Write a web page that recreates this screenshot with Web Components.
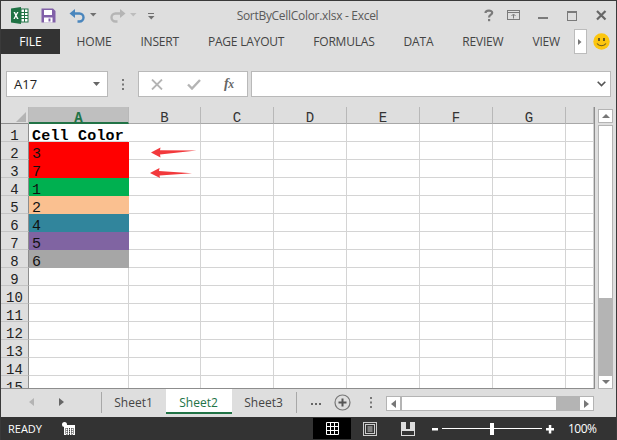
<!DOCTYPE html>
<html>
<head>
<meta charset="utf-8">
<title>SortByCellColor.xlsx - Excel</title>
<style>
  html, body { margin: 0; padding: 0; background: #dedede; }
  body { width: 617px; height: 440px; overflow: hidden; font-family: "Open Sans", sans-serif; }
</style>
</head>
<body>
<xl-window>
  <xl-titlebar title-text="SortByCellColor.xlsx - Excel"></xl-titlebar>
  <xl-ribbon></xl-ribbon>
  <xl-formula-bar cell="A17"></xl-formula-bar>
  <xl-sheet></xl-sheet>
  <xl-tabs></xl-tabs>
  <xl-status></xl-status>
</xl-window>

<script>
function shadow(el, html) {
  const root = el.attachShadow({ mode: 'open' });
  root.innerHTML = html;
  return root;
}

class XlWindow extends HTMLElement {
  constructor() {
    super();
    shadow(this, `
      <style>
        :host {
          display: flex;
          flex-direction: column;
          box-sizing: border-box;
          width: 617px;
          height: 440px;
          background: #dedede;
          border: 1px solid #3a3a3a;
          border-bottom: 0;
          overflow: hidden;
        }
      </style>
      <slot></slot>
    `);
  }
}

class XlTitlebar extends HTMLElement {
  connectedCallback() {
    if (this.shadowRoot) return;
    shadow(this, `
      <style>
        :host {
          display: block;
          position: relative;
          height: 28px;
          flex: none;
        }
        .title {
          display: flex;
          justify-content: center;
          align-items: center;
          box-sizing: border-box;
          height: 28px;
          padding: 1px 2px 0 0;
          font: 12px/27px "Open Sans", sans-serif;
          color: #5a5a5a;
          letter-spacing: -0.3px;
        }
        svg { position: absolute; display: block; }
      </style>
      <div class="title">${this.getAttribute('title-text')}</div>

      <svg style="left:10px;top:6px" width="18" height="17" viewBox="0 0 18 17">
        <rect x="6" y="2" width="11" height="13" fill="#fff" stroke="#1f7244"/>
        <path d="M10 2v13M13.5 2v13M6 5.500h11M6 8.500h11M6 11.500h11" stroke="#1f7244" fill="none"/>
        <path d="M0 1.500 10 0v17L0 15.500z" fill="#1f7244"/>
        <path d="M2.500 5 4 5l1 2 1.100-2 1.400 0-1.800 3.400 1.900 3.600H6l-1.100-2.200L3.800 12H2.400l1.800-3.600z" fill="#fff"/>
      </svg>

      <svg style="left:40px;top:7px" width="15" height="15" viewBox="0 0 15 15">
        <path d="M0.500 0.500h11.500l2.500 2.500v11.500H0.500z" fill="#8160a8"/>
        <rect x="3" y="2" width="8" height="5" fill="#fff"/>
        <rect x="3" y="9.500" width="8.500" height="5" fill="#fff"/>
        <rect x="7.500" y="10.500" width="2" height="3" fill="#8160a8"/>
      </svg>

      <svg style="left:68px;top:7px" width="17" height="15" viewBox="0 0 17 15">
        <path d="M3 5.500h7.500a3.800 3.800 0 0 1 0 8h-2" fill="none" stroke="#4a86bd" stroke-width="2.400"/>
        <path d="M0.500 5.500 6 1v9z" fill="#4a86bd"/>
      </svg>
      <svg style="left:89px;top:12px" width="7" height="4"><path d="M0 0h6.500L3.250 3.500z" fill="#707070"/></svg>

      <svg style="left:108px;top:7px" width="17" height="15" viewBox="0 0 17 15">
        <path d="M14 5.500H6.500a3.800 3.800 0 0 0 0 8h2" fill="none" stroke="#b5b5b5" stroke-width="2.400"/>
        <path d="M16.500 5.500 11 1v9z" fill="#b5b5b5"/>
      </svg>
      <svg style="left:129px;top:12px" width="7" height="4"><path d="M0 0h6.500L3.250 3.500z" fill="#bdbdbd"/></svg>

      <svg style="left:147px;top:12px" width="7" height="8">
        <path d="M0 0.500h6" stroke="#707070"/><path d="M0 3h6.500L3.250 6.500z" fill="#707070"/>
      </svg>

      <svg style="left:483px;top:8px" width="10" height="13" viewBox="0 0 10 13">
        <path d="M1.500 4C1.500 1 8.200 .8 8.200 3.800 8.200 5.800 5 5.500 5 8.500" fill="none" stroke="#7a7a7a" stroke-width="2.200"/>
        <rect x="4" y="10" width="2.200" height="2.200" fill="#7a7a7a"/>
      </svg>
      <svg style="left:506px;top:9px" width="14" height="11" viewBox="0 0 14 11">
        <rect x="0.500" y="0.500" width="12" height="9" fill="none" stroke="#7a7a7a"/>
        <path d="M0 2.500h13" stroke="#7a7a7a"/>
        <path d="M6.500 8.500V4.500M4.500 6l2-2 2 2" fill="none" stroke="#7a7a7a"/>
      </svg>
      <svg style="left:537px;top:16px" width="10" height="2"><rect width="10" height="2" fill="#7a7a7a"/></svg>
      <svg style="left:566px;top:10px" width="11" height="10" viewBox="0 0 11 10">
        <rect x="0.500" y="0.500" width="9" height="9" fill="none" stroke="#7a7a7a"/>
        <rect x="0" y="0" width="10" height="2" fill="#7a7a7a"/>
      </svg>
      <svg style="left:595px;top:9px" width="11" height="11" viewBox="0 0 11 11">
        <path d="M1 1l8.500 8.500M9.500 1 1 9.500" stroke="#666" stroke-width="2.200" fill="none"/>
      </svg>
    `);
  }
}

class XlRibbon extends HTMLElement {
  constructor() {
    super();
    const tabs = ['HOME', 'INSERT', 'PAGE LAYOUT', 'FORMULAS', 'DATA', 'REVIEW', 'VIEW'];
    shadow(this, `
      <style>
        :host {
          display: flex;
          align-items: stretch;
          height: 25px;
          flex: none;
          font: 12px/25px "Open Sans", sans-serif;
          color: #444;
        }
        .file {
          width: 59px;
          background: #333;
          color: #fff;
          text-align: center;
          flex: none;
        }
        .tabs {
          display: flex;
          gap: 29px;
          margin-left: 16.600px;
          width: 497.400px;
          flex: none;
          letter-spacing: -0.2px;
          white-space: nowrap;
        }
        .more {
          box-sizing: border-box;
          width: 13px;
          background: #fff;
          border: 1px solid #bcbcbc;
          display: flex;
          align-items: center;
          justify-content: center;
          flex: none;
        }
        .smile { margin-left: 6px; margin-top: 4px; display: block; flex: none; }
      </style>
      <div class="file">FILE</div>
      <div class="tabs">${tabs.map(t => `<span>${t}</span>`).join('')}</div>
      <div class="more"><svg width="4" height="6"><path d="M0 0l3.500 3L0 6z" fill="#777"/></svg></div>
      <svg class="smile" width="17" height="17" viewBox="0 0 17 17">
        <circle cx="8.500" cy="8.500" r="8.200" fill="#fcc60e"/>
        <rect x="5" y="5" width="2" height="3" fill="#6b5a20"/>
        <rect x="10" y="5" width="2" height="3" fill="#6b5a20"/>
        <path d="M4 10.500c2 3 7 3 9 0" fill="none" stroke="#6b5a20" stroke-width="1.100"/>
      </svg>
    `);
  }
}

class XlFormulaBar extends HTMLElement {
  connectedCallback() {
    if (this.shadowRoot) return;
    shadow(this, `
      <style>
        :host {
          display: flex;
          align-items: stretch;
          flex: none;
          height: 26px;
          margin: 17px 0 10px 5px;
        }
        .box {
          box-sizing: border-box;
          background: #fff;
          border: 1px solid #b9b9b9;
          flex: none;
        }
        .name {
          width: 102px;
          display: flex;
          align-items: center;
          justify-content: space-between;
          padding: 0 7px 0 7px;
          font: 13px "Open Sans", sans-serif;
          color: #222;
        }
        .dots { width: 30px; flex: none; display: flex; align-items: center; justify-content: center; }
        .btns {
          width: 110px;
          display: flex;
          align-items: center;
          font: italic 14px "Liberation Serif", serif;
          color: #666;
        }
        .input {
          flex: none;
          width: 360px;
          margin-left: 3px;
          display: flex;
          align-items: center;
          justify-content: flex-end;
          padding-right: 4px;
        }
        svg { display: block; }
        .fx { margin-left: 23px; letter-spacing: -0.5px; font-weight: bold; }
      </style>
      <div class="box name">
        <span>${this.getAttribute('cell')}</span>
        <svg width="7" height="4"><path d="M0 0h7L3.500 4z" fill="#666"/></svg>
      </div>
      <div class="dots">
        <svg width="2" height="11"><path d="M0 0h2v2H0zM0 4.500h2v2H0zM0 9h2v2H0z" fill="#777"/></svg>
      </div>
      <div class="box btns">
        <svg style="margin-left:12px" width="12" height="11" viewBox="0 0 12 11"><path d="M1 0.500 11 10.500M11 0.500 1 10.500" stroke="#b4b4b4" stroke-width="1.800" fill="none"/></svg>
        <svg style="margin-left:24px" width="14" height="11" viewBox="0 0 14 11"><path d="M1 5.500 5 9.500 13 1" stroke="#b4b4b4" stroke-width="2.400" fill="none"/></svg>
        <span class="fx">f<small>x</small></span>
      </div>
      <div class="box input">
        <svg width="9" height="6" viewBox="0 0 9 6"><path d="M0.700 0.700 4.500 4.500 8.300 0.700" stroke="#555" stroke-width="1.600" fill="none"/></svg>
      </div>
    `);
  }
}

class XlSheet extends HTMLElement {
  constructor() {
    super();
    const colW = [100, 72, 73, 73, 73, 73, 73, 28];
    const letters = ['A', 'B', 'C', 'D', 'E', 'F', 'G', ''];
    const fills = { 2: '#ff0000', 3: '#ff0000', 4: '#00b050', 5: '#fac090', 6: '#31859c', 7: '#8064a2', 8: '#a6a6a6' };
    const vals = { 1: 'Cell Color', 2: '3', 3: '7', 4: '1', 5: '2', 6: '4', 7: '5', 8: '6' };

    let cells = '<div class="corner"><svg width="10" height="10"><path d="M10 0v10H0z" fill="#b4b4b4"/></svg></div>';
    letters.forEach((l, i) => {
      cells += `<div class="col${i === 0 ? ' sel' : ''}">${l}</div>`;
    });
    for (let r = 1; r <= 15; r++) {
      cells += `<div class="row">${r}</div>`;
      letters.forEach((l, i) => {
        if (i === 0 && vals[r]) {
          const style = fills[r] ? `background:${fills[r]};border-color:${fills[r]}` : '';
          cells += `<div class="cell a${r === 1 ? ' head' : ''}" style="${style}">${vals[r]}</div>`;
        } else {
          cells += '<div class="cell"></div>';
        }
      });
    }

    shadow(this, `
      <style>
        :host {
          display: flex;
          flex: none;
          height: 282px;
          position: relative;
          overflow: hidden;
        }
        .grid {
          display: grid;
          grid-template-columns: 28px ${colW.map(w => w + 'px').join(' ')};
          grid-template-rows: 17px repeat(15, 18px);
          width: 594px;
          height: 282px;
          flex: none;
          overflow: hidden;
          box-sizing: border-box;
          border-right: 1px solid #8d8d8d;
          border-bottom: 1px solid #8d8d8d;
        }
        .corner, .col, .row, .cell { box-sizing: border-box; min-height: 0; }
        .corner {
          background: #dedede;
          border-bottom: 1px solid #8d8d8d;
          border-right: 1px solid #b8b8b8;
          padding: 5px 0 0 15px;
        }
        .corner svg { display: block; }
        .col {
          background: #dedede;
          border-right: 1px solid #b8b8b8;
          border-bottom: 1px solid #a8a8a8;
          text-align: center;
          padding-top: 4px;
          font: 14px/14px "Liberation Mono", monospace;
          color: #333;
        }
        .col.sel {
          background: #bfbfbf;
          border-bottom: 2px solid #217346;
          color: #217346;
          font-weight: bold;
        }
        .row {
          background: #dedede;
          border-right: 1px solid #8d8d8d;
          border-bottom: 1px solid #c4c4c4;
          text-align: center;
          padding-top: 7px;
          font: 14px/11px "Liberation Mono", monospace;
          color: #222;
        }
        .cell {
          background: #fff;
          border-right: 1px solid #d4d4d4;
          border-bottom: 1px solid #d4d4d4;
        }
        .cell.a {
          font: 15px/11px "Liberation Mono", monospace;
          color: #111;
          padding: 7px 0 0 3px;
          white-space: pre;
        }
        .cell.head {
          font: bold 15px/11px "Liberation Mono", monospace;
          letter-spacing: 0.2px;
          color: #000;
          border-right-color: #fff;
        }
        .vbar {
          flex: none;
          width: 15px;
          margin-left: 3px;
          margin-top: 2px;
          display: flex;
          flex-direction: column;
          height: 280px;
        }
        .btn {
          box-sizing: border-box;
          flex: none;
          background: #fff;
          border: 1px solid #b4b4b4;
          height: 14px;
          display: flex;
          align-items: center;
          justify-content: center;
        }
        .thumb {
          box-sizing: border-box;
          flex: none;
          height: 174px;
          margin-top: 2px;
          background: #fff;
          border: 1px solid #b4b4b4;
        }
        .track { flex: 1; background: #b4b4b4; }
        .arrow { position: absolute; display: block; }
      </style>
      <div class="grid">${cells}</div>
      <div class="vbar">
        <div class="btn"><svg width="8" height="4"><path d="M4 0l4 4H0z" fill="#777"/></svg></div>
        <div class="thumb"></div>
        <div class="track"></div>
        <div class="btn"><svg width="8" height="4"><path d="M4 4 8 0H0z" fill="#777"/></svg></div>
      </div>
      <svg class="arrow" style="left:148px;top:40px" width="50" height="38" viewBox="0 0 50 38">
        <path d="M2 5.500 11.500 0.500 11 3.300 47.500 3.500 11 7.500 11.500 10.500z" fill="#f2393c"/>
        <path d="M1 26 10.500 21 10 24 43 26.200 10.500 28.500 11 31z" fill="#f2393c"/>
      </svg>
    `);
  }
}

class XlTabs extends HTMLElement {
  constructor() {
    super();
    shadow(this, `
      <style>
        :host {
          display: flex;
          flex: none;
          height: 28px;
          align-items: flex-start;
          font: 12px "Open Sans", sans-serif;
          color: #444;
          background: #dedede;
        }
        .nav {
          box-sizing: border-box;
          width: 100px;
          height: 26px;
          flex: none;
          display: flex;
          align-items: center;
          padding-left: 28px;
          gap: 25px;
        }
        .nav svg { display: block; }
        .tab {
          box-sizing: border-box;
          flex: none;
          display: flex;
          align-items: center;
          justify-content: center;
          width: 65px;
          height: 21px;
          margin-top: 3px;
          padding-right: 1px;
          border-left: 1px solid #a8a8a8;
        }
        .tab.on {
          width: 66px;
          height: 25px;
          margin-top: 0;
          padding-top: 3px;
          background: #fff;
          color: #217346;
          border-left: 0;
          border-bottom: 2px solid #217346;
        }
        .tab.last { border-left: 0; border-right: 1px solid #a8a8a8; }
        .tail {
          flex: none;
          display: flex;
          align-items: center;
          height: 26px;
          margin-left: 14px;
        }
        .ell { display: block; margin-top: 3px; }
        .plus { display: block; margin-left: 13px; }
        .dots { display: block; margin-left: 19px; }
        .hbar {
          box-sizing: border-box;
          flex: none;
          width: 208px;
          height: 15px;
          margin: 7px 0 0 14px;
          border: 1px solid #b4b4b4;
          background: #fff;
          display: flex;
          align-items: stretch;
        }
        .hbtn { flex: none; width: 13px; display: flex; align-items: center; justify-content: center; }
        .hthumb { flex: none; width: 154px; border-left: 2px solid #b4b4b4; }
        .htrack { flex: none; width: 24px; background: #b4b4b4; }
      </style>
      <div class="nav">
        <svg width="5" height="8"><path d="M5 0v8L0 4z" fill="#b4b4b4"/></svg>
        <svg width="5" height="8"><path d="M0 0v8l5-4z" fill="#666"/></svg>
      </div>
      <div class="tab">Sheet1</div>
      <div class="tab on">Sheet2</div>
      <div class="tab last">Sheet3</div>
      <div class="tail">
        <svg class="ell" width="10" height="2"><path d="M0 0h2v2H0zM4 0h2v2H4zM8 0h2v2H8z" fill="#666"/></svg>
        <svg class="plus" width="17" height="17" viewBox="0 0 17 17">
          <circle cx="8.500" cy="8.500" r="7.500" fill="none" stroke="#777" stroke-width="1.200"/>
          <path d="M8.500 4.500v8M4.500 8.500h8" stroke="#555" stroke-width="2" fill="none"/>
        </svg>
        <svg class="dots" width="2" height="11"><path d="M0 0h2v2H0zM0 4.500h2v2H0zM0 9h2v2H0z" fill="#777"/></svg>
      </div>
      <div class="hbar">
        <div class="hbtn"><svg width="5" height="8"><path d="M5 0v8L0 4z" fill="#777"/></svg></div>
        <div class="hthumb"></div>
        <div class="htrack"></div>
        <div class="hbtn"><svg width="5" height="8"><path d="M0 0v8l5-4z" fill="#777"/></svg></div>
      </div>
    `);
  }
}

class XlStatus extends HTMLElement {
  constructor() {
    super();
    shadow(this, `
      <style>
        :host {
          display: flex;
          flex: none;
          align-items: center;
          height: 23px;
          margin: 0 -1px;
          background: #333;
          color: #fff;
          font: 11px "Open Sans", sans-serif;
        }
        svg { display: block; flex: none; }
        .ready { margin-left: 8px; width: 54px; flex: none; }
        .normal {
          flex: none;
          box-sizing: border-box;
          margin-left: 238px;
          width: 38px;
          height: 21px;
          background: #000;
          display: flex;
          align-items: center;
          justify-content: center;
        }
        .pct { margin-left: 14px; font-size: 12px; letter-spacing: -0.5px; }
      </style>
      <span class="ready">READY</span>
      <svg width="13" height="13" viewBox="0 0 13 13">
        <rect x="2" y="3" width="11" height="10" fill="#fff"/>
        <circle cx="2.500" cy="2.500" r="2.500" fill="#fff"/>
        <path d="M3 7h9M3 9h9M3 11h9M5 6v7M7.500 6v7M10 6v7" stroke="#333" fill="none" stroke-dasharray="1 1"/>
      </svg>
      <div class="normal">
        <svg width="13" height="13" viewBox="0 0 13 13"><path d="M0.500 0.500h12v12h-12zM4.500 0.500v12M8.500 0.500v12M0.500 4.500h12M0.500 8.500h12" stroke="#fff" fill="none"/></svg>
      </div>
      <svg style="margin-left:12px" width="14" height="14" viewBox="0 0 14 14">
        <rect x="0.500" y="0.500" width="13" height="13" fill="none" stroke="#ccc"/>
        <rect x="2.500" y="2.500" width="9" height="9" fill="none" stroke="#ccc"/>
        <path d="M4.500 5h5M4.500 7h5M4.500 9h5" stroke="#ccc"/>
      </svg>
      <svg style="margin-left:24px" width="14" height="14" viewBox="0 0 14 14">
        <path d="M0 0h5v7h4V0h5v14H0z" fill="#ddd"/>
        <path d="M1 9h12v4H1z" fill="#333"/>
        <path d="M1 8.500h4" stroke="#ddd"/>
      </svg>
      <svg style="margin-left:17px" width="122" height="14" viewBox="0 0 122 14">
        <path d="M0 6h6v2.500H0z" fill="#fff"/>
        <path d="M10 6.500h100" stroke="#fff" fill="none"/>
        <rect x="58" y="1" width="4" height="12" fill="#fff"/>
        <path d="M114 6h8v2.500h-8zM116.800 3h2.500v8.500h-2.500z" fill="#fff"/>
      </svg>
      <span class="pct">100%</span>
    `);
  }
}

customElements.define('xl-window', XlWindow);
customElements.define('xl-titlebar', XlTitlebar);
customElements.define('xl-ribbon', XlRibbon);
customElements.define('xl-formula-bar', XlFormulaBar);
customElements.define('xl-sheet', XlSheet);
customElements.define('xl-tabs', XlTabs);
customElements.define('xl-status', XlStatus);
</script>
</body>
</html>
